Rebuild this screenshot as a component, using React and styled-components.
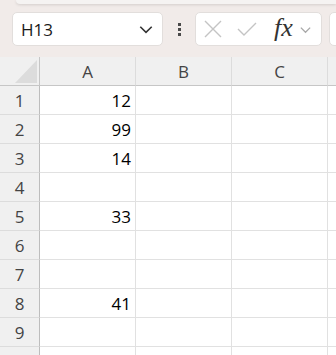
import React from 'react';
import styled, { createGlobalStyle } from 'styled-components';

const GlobalStyle = createGlobalStyle`
  html, body { margin: 0; padding: 0; background: #ffffff; }
  body { font-family: "Open Sans", "Noto Sans", sans-serif; overflow: hidden; }
`;

const Page = styled.div`
  width: 336px;
  height: 355px;
  overflow: hidden;
  display: flex;
  flex-direction: column;
`;

const TopArea = styled.div`
  background: #f1ebe9;
  height: 57px;
  flex: none;
  display: flex;
  flex-direction: column;
  overflow: hidden;
`;

const Ribbon = styled.div`
  height: 4px;
  margin-left: 16px;
  background: #f5f3f2;
  border-bottom-left-radius: 6px;
  box-shadow: 0 1px 3px rgba(0, 0, 0, 0.12);
`;

const Toolbar = styled.div`
  display: flex;
  align-items: center;
  padding: 8px 0 0 12px;
`;

const Box = styled.div`
  height: 34px;
  box-sizing: border-box;
  background: #ffffff;
  border: 1px solid #e2dedc;
  border-radius: 5px;
  display: flex;
  align-items: center;
  flex: none;
`;

const NameBox = styled(Box)`
  width: 151px;
  padding: 0 8px 0 8px;
  justify-content: space-between;
  font-size: 17px;
  color: #1a1a1a;
`;

const Dots = styled.div`
  width: 32px;
  flex: none;
  display: flex;
  flex-direction: column;
  align-items: center;
  gap: 2px;
  span {
    width: 3px;
    height: 3px;
    background: #4a4a4a;
  }
`;

const FormulaBox = styled(Box)`
  width: 127px;
  padding-left: 8px;
  overflow: hidden;
`;

const Fx = styled.span`
  flex: none;
  font-family: "Liberation Serif", "DejaVu Serif", serif;
  font-style: italic;
  font-size: 26px;
  color: #333;
  margin-left: 17px;
  line-height: 1;
  margin-top: -3px;
`;

const NextBox = styled(Box)`
  width: 20px;
  margin-left: 7px;
`;

const Grid = styled.div`
  display: grid;
  grid-template-columns: 40px 96px 96px 96px 40px;
  grid-auto-rows: 29px;
  background: #ffffff;
`;

const HeadCell = styled.div`
  background: #f0f0f0;
  box-sizing: border-box;
  border-bottom: 1px solid #c6c6c6;
  border-right: 1px solid ${p => (p.$corner ? '#c6c6c6' : '#dcdcdc')};
  display: flex;
  align-items: center;
  justify-content: center;
  font-size: 17px;
  color: #444;
  position: relative;
`;

const RowHead = styled.div`
  background: #f0f0f0;
  box-sizing: border-box;
  border-bottom: 1px solid #dcdcdc;
  border-right: 1px solid #bdbdbd;
  display: flex;
  align-items: center;
  justify-content: center;
  font-size: 17px;
  color: #444;
`;

const Cell = styled.div`
  box-sizing: border-box;
  border-bottom: 1px solid #e1e1e1;
  border-right: 1px solid #e1e1e1;
  display: flex;
  align-items: center;
  justify-content: flex-end;
  padding-right: 4px;
  font-size: 17px;
  color: #000;
`;

const Corner = styled.svg`
  position: absolute;
  left: 15px;
  top: 3px;
`;

const ChevronWrap = styled.span`
  display: flex;
  flex: none;
  margin-left: 6px;
`;

const Chevron = ({ size = 14, color = '#444' }) => (
  <svg width={size} height={size} viewBox="0 0 14 14">
    <path d="M2 5 L7 10 L12 5" fill="none" stroke={color} strokeWidth="1.4" />
  </svg>
);

const rows = [
  ['12', '', ''],
  ['99', '', ''],
  ['14', '', ''],
  ['', '', ''],
  ['33', '', ''],
  ['', '', ''],
  ['', '', ''],
  ['41', '', ''],
  ['', '', ''],
];

export default function App() {
  return (
    <Page>
      <GlobalStyle />
      <TopArea>
        <Ribbon />
        <Toolbar>
          <NameBox>
            <span>H13</span>
            <Chevron size={16} color="#333" />
          </NameBox>
          <Dots>
            <span />
            <span />
            <span />
          </Dots>
          <FormulaBox>
            <svg width="18" height="18" viewBox="0 0 18 18">
              <path d="M1 1 L17 17 M17 1 L1 17" stroke="#c4c4c4" strokeWidth="1.4" fill="none" />
            </svg>
            <svg width="20" height="16" viewBox="0 0 20 16" style={{ marginLeft: 15 }}>
              <path d="M1 8 L7 14 L19 2" stroke="#c4c4c4" strokeWidth="1.4" fill="none" />
            </svg>
            <Fx>fx</Fx>
            <ChevronWrap>
              <Chevron size={13} color="#a8a8a8" />
            </ChevronWrap>
          </FormulaBox>
          <NextBox />
        </Toolbar>
      </TopArea>
      <Grid>
        <HeadCell $corner>
          <Corner width="22" height="23" viewBox="0 0 22 23">
            <path d="M22 0 L22 23 L0 23 Z" fill="#dcdcdc" />
          </Corner>
        </HeadCell>
        <HeadCell>A</HeadCell>
        <HeadCell>B</HeadCell>
        <HeadCell>C</HeadCell>
        <HeadCell />
        {rows.map((r, i) => (
          <React.Fragment key={i}>
            <RowHead>{i + 1}</RowHead>
            {r.map((v, j) => (
              <Cell key={j}>{v}</Cell>
            ))}
            <Cell />
          </React.Fragment>
        ))}
        <RowHead />
        <Cell />
        <Cell />
        <Cell />
        <Cell />
      </Grid>
    </Page>
  );
}
